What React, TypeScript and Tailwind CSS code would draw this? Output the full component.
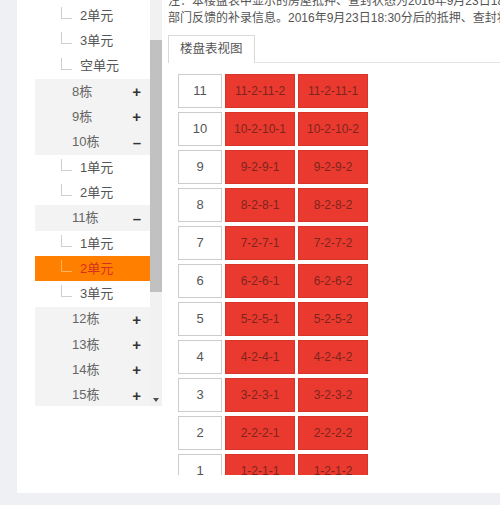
import React from "react";

type TreeRow =
  | { kind: "unit"; label: string; active?: boolean }
  | { kind: "building"; label: string; open: boolean };

const tree: TreeRow[] = [
  { kind: "unit", label: "2单元" },
  { kind: "unit", label: "3单元" },
  { kind: "unit", label: "空单元" },
  { kind: "building", label: "8栋", open: false },
  { kind: "building", label: "9栋", open: false },
  { kind: "building", label: "10栋", open: true },
  { kind: "unit", label: "1单元" },
  { kind: "unit", label: "2单元" },
  { kind: "building", label: "11栋", open: true },
  { kind: "unit", label: "1单元" },
  { kind: "unit", label: "2单元", active: true },
  { kind: "unit", label: "3单元" },
  { kind: "building", label: "12栋", open: false },
  { kind: "building", label: "13栋", open: false },
  { kind: "building", label: "14栋", open: false },
  { kind: "building", label: "15栋", open: false },
];

const floors = [11, 10, 9, 8, 7, 6, 5, 4, 3, 2, 1];

function cellName(floor: number, room: number) {
  // 楼层-单元-楼层-房号
  return `${floor}-2-${floor}-${room}`;
}

function Row({ row }: { row: TreeRow }) {
  if (row.kind === "building") {
    return (
      <div className="h-[25.3px] bg-[#f3f3f3] flex items-center pl-[37px] pr-[9px] text-[13px] text-[#666]">
        <span className="flex-1">{row.label}</span>
        <span className="text-[15px] font-bold text-[#333] leading-none">
          {row.open ? "–" : "+"}
        </span>
      </div>
    );
  }
  return (
    <div
      className={[
        "h-[25.3px] relative flex items-center pl-[45px] text-[13px]",
        row.active ? "bg-[#ff8000] text-[#d62f1c]" : "bg-white text-[#555]",
      ].join(" ")}
    >
      <span
        className={[
          "absolute left-[26px] top-[4px] w-[11px] h-[12px] border-l border-b",
          row.active ? "border-[#ffb35c]" : "border-[#cfcfcf]",
        ].join(" ")}
      />
      {row.label}
    </div>
  );
}

export default function App() {
  return (
    <div
      className="w-[500px] h-[505px] bg-[#eef0f3] overflow-hidden"
      style={{ fontFamily: '"Liberation Sans", "Noto Sans CJK SC", sans-serif' }}
    >
      <div className="ml-[17px] h-[493px] bg-white flex">
        {/* 左侧楼栋树 */}
        <div className="w-[145px] shrink-0 pl-[18px]">
          <div className="h-[406px] flex">
            <div className="w-[115px] pt-[3px] overflow-hidden">
              {tree.map((r, i) => (
                <Row key={i} row={r} />
              ))}
            </div>
            <div className="w-[12px] bg-[#f1f1f1] flex flex-col">
              <div className="h-[40px]" />
              <div className="h-[252px] bg-[#c1c1c1]" />
              <div className="flex-1" />
              <div className="h-[12px] flex items-center justify-center">
                <span className="w-0 h-0 border-l-[3px] border-r-[3px] border-t-[4px] border-l-transparent border-r-transparent border-t-[#505050]" />
              </div>
            </div>
          </div>
        </div>

        {/* 右侧楼盘表 */}
        <div className="flex-1 min-w-0 pl-[6px] pt-0 overflow-hidden">
          <div className="-mt-[7px] text-[12px] leading-[17px] text-[#555] whitespace-nowrap overflow-hidden">
            <div>注：本楼盘表中显示的房屋抵押、查封状态为2016年9月23日18:30前不动产登记</div>
            <div>部门反馈的补录信息。2016年9月23日18:30分后的抵押、查封状态</div>
          </div>

          <div className="mt-[8px] flex items-end border-b border-[#e5e5e5]">
            <div className="h-[28px] px-[11px] border border-b-0 border-[#d9d9d9] bg-white flex items-center text-[12.5px] text-[#555] -mb-px">
              楼盘表视图
            </div>
          </div>

          <div className="mt-[11px] pl-[10px] h-[401px] overflow-hidden flex flex-col gap-[4px]">
            {floors.map((f) => {
              // 顶层房号顺序相反
              const rooms = f === 11 ? [2, 1] : [1, 2];
              return (
                <div key={f} className="flex gap-[3px] shrink-0">
                  <div className="w-[44px] h-[34px] border border-[#cccccc] bg-white flex items-center justify-center text-[13px] text-[#555]">
                    {f}
                  </div>
                  {rooms.map((n) => (
                    <div
                      key={n}
                      className="w-[70px] h-[34px] bg-[#ea3a2f] border border-[#d8342a] flex items-center justify-center text-[12px] text-[#7e241d]"
                    >
                      {cellName(f, n)}
                    </div>
                  ))}
                </div>
              );
            })}
          </div>
        </div>
      </div>
    </div>
  );
}
